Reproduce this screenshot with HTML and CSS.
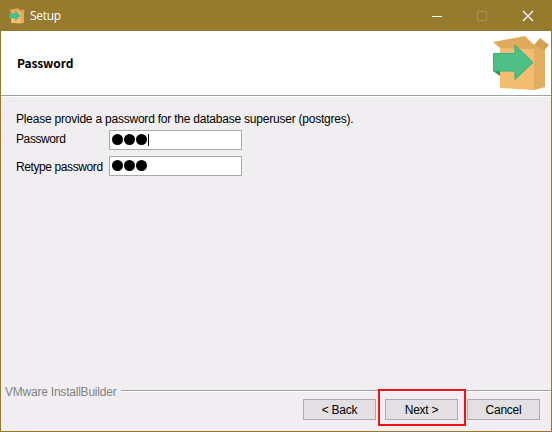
FILE: index.html
```
<!DOCTYPE html>
<html lang="en">

<head>
    <meta charset="utf-8">
    <title>Setup</title>
    <link rel="stylesheet" href="styles.css">
</head>

<body>
    <svg class="symbols" width="0" height="0">
        <symbol id="box" viewBox="0 0 56 55">
            <path fill="#f2bd70" d="M7 10 40 8 52 14V51L41 54 7 52z" />
            <path fill="#e2ad5f" d="M41 9 52 14V51L41 54z" />
            <path fill="#dfaa5c" d="M0 6 32 0 41 9V13L7 12z" />
            <path fill="#d5a052" d="M41 9 47 2 56 9 51 15z" />
            <path fill="#2a9465" d="M0 35H7V40z" />
            <path fill="#50bf87" stroke="#28b77c" d="M.5 17.5H22V9L40 26.5 22 43.5V35H.5z" />
        </symbol>
    </svg>
    <div class="window">
        <header class="titlebar">
            <svg class="app-icon"><use href="#box" /></svg>
            <span class="title">Setup</span>
            <svg class="controls" width="102" height="12" fill="none" stroke="#fff">
                <path d="M0 6.5H10" />
                <path stroke="#ab9149" d="M45.5 1.5H54.5V10.5H45.5z" />
                <path stroke-width="1.2" d="M91 1 101 11M101 1 91 11" />
            </svg>
        </header>
        <section class="banner">
            <h1>Password</h1>
            <svg class="logo"><use href="#box" /></svg>
        </section>
        <main>
            <p class="intro">Please provide a password for the database superuser (postgres).</p>
            <div class="row">
                <label class="first-label">Password</label>
                <div class="field focus"><i></i><i></i><i></i></div>
            </div>
            <div class="row">
                <label class="second-label">Retype password</label>
                <div class="field"><i></i><i></i><i></i></div>
            </div>
        </main>
        <footer>
            <div class="brand"><span>VMware InstallBuilder</span></div>
            <div class="buttons">
                <button class="back">&lt; Back</button>
                <button class="next">Next &gt;</button>
                <button class="cancel">Cancel</button>
            </div>
        </footer>
    </div>
</body>

</html>
```

FILE: styles.css
```
*,
*::after {
    box-sizing: border-box;
}

body {
    margin: 0;
    overflow: hidden;
    font-family: "Liberation Sans", sans-serif;
    font-size: 12px;
    line-height: 14px;
    letter-spacing: -0.22px;
    color: #000;
}

.symbols {
    position: absolute;
}

.window {
    display: flex;
    flex-direction: column;
    width: 552px;
    height: 432px;
    border: 1px solid #97792e;
    background: #f0eef1;
}

.titlebar {
    display: flex;
    align-items: center;
    height: 30px;
    padding-left: 8px;
    background: #967a2e;
}

.app-icon {
    width: 16px;
    height: 16px;
}

.title {
    margin-left: 5px;
    font-family: "Open Sans", sans-serif;
    letter-spacing: -0.3px;
    color: #fff;
}

.controls {
    margin-left: auto;
    margin-right: 17px;
}

.banner {
    display: flex;
    justify-content: space-between;
    height: 66px;
    padding: 5px 2px 0 16px;
    background: #fff;
    border-bottom: 1px solid #fff;
    box-shadow: inset 0 -1px #a0a0a0;
}

h1 {
    margin: 20px 0 0;
    font-family: "Noto Sans CJK JP", sans-serif;
    font-size: 12px;
    line-height: 14px;
    letter-spacing: -0.1px;
}

.logo {
    width: 56px;
    height: 55px;
}

main {
    flex: 1;
    padding: 15px 15px 0;
}

.intro {
    margin: 0 0 4px;
    white-space: nowrap;
}

.row {
    display: flex;
    height: 20px;
    margin-bottom: 6px;
}

label {
    width: 93px;
    letter-spacing: -0.4px;
    white-space: nowrap;
}

.first-label {
    padding-top: 2px;
}

.second-label {
    padding-top: 4px;
}

.field {
    display: flex;
    gap: 1px;
    width: 133px;
    padding: 3px 2px;
    background: #fff;
    border: 1px solid #aba9ac;
}

.field i {
    width: 11px;
    height: 11px;
    border-radius: 50%;
    background: #000;
}

.focus::after {
    content: "";
    width: 1px;
    height: 12px;
    background: #000;
}

footer {
    height: 46px;
}

.brand {
    display: flex;
    align-items: center;
    height: 12px;
    padding-left: 4px;
    color: #848285;
}

.brand span {
    width: 116px;
    padding-top: 2px;
    white-space: nowrap;
}

.brand::after {
    content: "";
    flex: 1;
    height: 2px;
    background: #a0a0a0;
    border-bottom: 1px solid #fff;
}

.buttons {
    display: flex;
    justify-content: flex-end;
    gap: 9px;
    padding: 2px 11px 0 0;
}

button {
    width: 73px;
    height: 21px;
    padding: 2px 0 0;
    font: inherit;
    letter-spacing: -0.25px;
    line-height: 17px;
    color: #000;
    background: #e2e0e3;
    border: 1px solid #adabae;
}

.next {
    position: relative;
}

/* red marker around the button */
.next::after {
    content: "";
    position: absolute;
    left: -8px;
    top: -11px;
    width: 88px;
    height: 37px;
    border: 2px solid #f51016;
}
```
